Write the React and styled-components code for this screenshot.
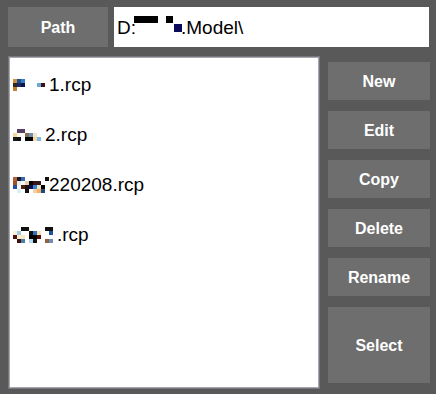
import styled, { createGlobalStyle } from "styled-components";

const GlobalStyle = createGlobalStyle`
  html, body {
    margin: 0;
    padding: 0;
    background: #595959;
  }
`;

// redacted bits of the file names, drawn as colour cells (4px each)
const ARCHIVOS = [
  {
    nombre: "1.rcp",
    celdas: [
      ["#d09040", "#20508a", "#3a7ac8", "", "", "", "", "", ""],
      ["#302818", "#1a2a6a", "#0c1448", "", "", "", "#6aa8d8", "#401010", ""],
      ["#c08030", "", "", "", "", "", "", "", ""],
    ],
  },
  {
    nombre: "2.rcp",
    celdas: [
      ["", "#5a4060", "#5a4060", "", "", "", "", ""],
      ["#f0d8a0", "#fff8e8", "", "#8a6a50", "#6a90b8", "#f4e4c8", "", ""],
      ["#181818", "#101010", "", "#000", "#000", "#f4d8a8", "#80b8e0", ""],
    ],
  },
  {
    nombre: "220208.rcp",
    celdas: [
      ["#b06040", "#1a1a1a", "#3a64b8", "", "", "", "", "", "#111"],
      ["#a05020", "#e0f0f8", "#f8f8f8", "#e8d0a8", "#000", "#401010", "#301818", "", ""],
      ["#2050a0", "#f8f8f8", "#502010", "#1a1010", "#101050", "#3a80d0", "#f0e0c0", "#000", ""],
      ["", "#d8f0f8", "", "#101010", "", "#f0d0a8", "#f8b060", "#204a80", ""],
    ],
  },
  {
    nombre: ".rcp",
    celdas: [
      ["", "", "#101010", "#101010", "", "", "", "", "#101010", "#101010", ""],
      ["#f8f0d8", "#a8c8e0", "", "", "#101010", "#3070c0", "#f8e0b0", "", "", "#2050a0", ""],
      ["#501010", "#f8f0d0", "#f8e8c8", "", "#000", "#000", "#501010", "", "", "", ""],
      ["", "#401010", "#4a80b0", "", "#b8d8f0", "#101010", "", "", "#906040", "#6a90b8", ""],
    ],
  },
];

const BOTONES = ["New", "Edit", "Copy", "Delete", "Rename"];

const App = () => {
  return (
    <>
      <GlobalStyle />
      <Pagina>
        <BarraRuta>
          <Boton $ancho="100px">Path</Boton>
          <CampoRuta>
            D:
            <Tachado>
              <Bloque $w={24} $h={7} $color="#000" $ml={-2} />
              <Bloque $w={7} $h={7} $color="#000" $ml={8} />
              <Bloque $w={8} $h={8} $color="#0a0a5a" $ml={1} $mt={8} />
            </Tachado>
            .Model\
          </CampoRuta>
        </BarraRuta>

        <Cuerpo>
          <Lista>
            {ARCHIVOS.map((archivo) => (
              <Fila key={archivo.nombre}>
                <Mosaico $cols={archivo.celdas[0].length}>
                  {archivo.celdas.flat().map((c, i) => (
                    <Celda key={i} $color={c} />
                  ))}
                </Mosaico>
                {archivo.nombre}
              </Fila>
            ))}
          </Lista>

          <Columna>
            {BOTONES.map((b) => (
              <Boton key={b}>{b}</Boton>
            ))}
            <Boton $alto="76px">Select</Boton>
          </Columna>
        </Cuerpo>
      </Pagina>
    </>
  );
};

export default App;

const Pagina = styled.div`
  width: 436px;
  height: 394px;
  box-sizing: border-box;
  padding: 7px 6px 6px 8px;
  display: flex;
  flex-direction: column;
  gap: 9px;
  font-family: "Liberation Sans", Arial, sans-serif;
`;

const BarraRuta = styled.div`
  display: flex;
  gap: 6px;
  height: 40px;
  margin-right: 1px;
`;

const Boton = styled.div`
  width: ${(p) => p.$ancho || "102px"};
  height: ${(p) => p.$alto || "38px"};
  flex-shrink: 0;
  background: #6e6e6e;
  color: #ffffff;
  font-weight: bold;
  font-size: 16px;
  display: flex;
  align-items: center;
  justify-content: center;
  padding-top: 1px;
  box-sizing: border-box;
  ${(p) => (p.$ancho ? "height: 40px;" : "")}
`;

const CampoRuta = styled.div`
  flex: 1;
  background: #ffffff;
  color: #000;
  font-size: 19px;
  display: flex;
  align-items: center;
  padding-left: 3px;
  padding-top: 1px;
`;

const Tachado = styled.span`
  display: inline-flex;
  align-items: flex-start;
  width: 45px;
  height: 24px;
`;

const Bloque = styled.span`
  display: block;
  flex-shrink: 0;
  width: ${(p) => p.$w}px;
  height: ${(p) => p.$h}px;
  background: ${(p) => p.$color};
  margin-left: ${(p) => p.$ml || 0}px;
  margin-top: ${(p) => p.$mt || 0}px;
`;

const Cuerpo = styled.div`
  flex: 1;
  display: flex;
  gap: 8px;
`;

const Lista = styled.div`
  width: 312px;
  box-sizing: border-box;
  background: #ffffff;
  border: 1px solid #76767c;
  box-shadow: inset 0 0 0 1px #a6a6ae;
  padding: 3px 0 0 4px;
  margin-bottom: -1px;
`;

const Fila = styled.div`
  height: 50px;
  display: flex;
  align-items: center;
  font-size: 19px;
  color: #000;
`;

const Mosaico = styled.span`
  display: inline-grid;
  grid-template-columns: repeat(${(p) => p.$cols}, 4px);
  grid-auto-rows: 4px;
  align-self: center;
  margin-top: -1px;
`;

const Celda = styled.span`
  background: ${(p) => p.$color || "transparent"};
`;

const Columna = styled.div`
  display: flex;
  flex-direction: column;
  gap: 11px;
  padding-top: 6px;
`;
